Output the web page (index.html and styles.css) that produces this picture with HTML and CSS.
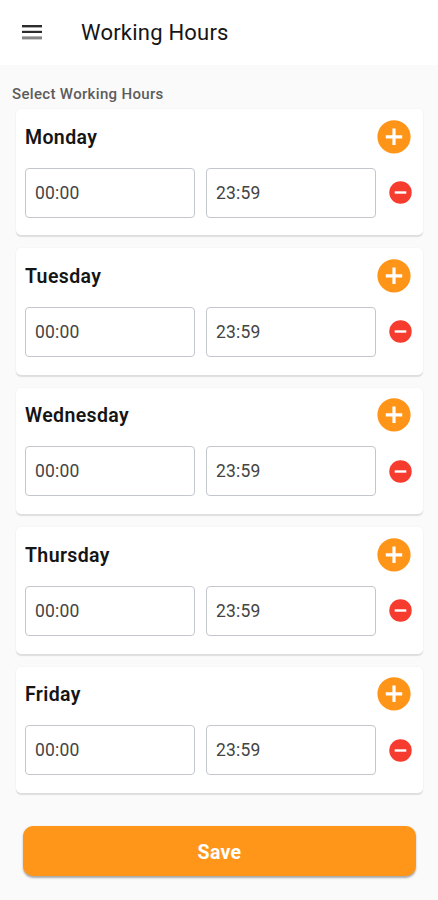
FILE: index.html
```html
<!DOCTYPE html>
<html lang="en">
<head>
    <meta charset="UTF-8">
    <meta name="viewport" content="width=device-width, initial-scale=1.0">
    <title>Working Hours</title>
    <link rel="stylesheet" href="styles.css">
</head>
<body>
    <header class="topbar">
        <svg class="menu" viewBox="0 0 20 15">
            <rect y="0" width="20" height="2.4"/>
            <rect y="5.8" width="20" height="2.2"/>
            <rect class="last" y="11.4" width="20" height="3"/>
        </svg>
        <h1>Working Hours</h1>
    </header>

    <main>
        <p class="label">Select Working Hours</p>
        <div id="days"></div>
        <button class="save">Save</button>
    </main>

    <script>
        const days = ["Monday", "Tuesday", "Wednesday", "Thursday", "Friday"];

        document.getElementById("days").innerHTML = days.map(day => `
            <section class="card">
                <div class="card-head">
                    <h2>${day}</h2>
                    <svg class="add" viewBox="0 0 34 34">
                        <circle cx="17" cy="16.8" r="16.6"/>
                        <path d="M17 8.6v16.4M8.8 16.8h16.4"/>
                    </svg>
                </div>
                <div class="times">
                    <div class="time">00:00</div>
                    <div class="time">23:59</div>
                    <svg class="remove" viewBox="0 0 23 23">
                        <circle cx="11.5" cy="11.5" r="11.2"/>
                        <path d="M5.7 11.5h11.6"/>
                    </svg>
                </div>
            </section>`).join("");
    </script>
</body>
</html>
```

FILE: styles.css
```css
* {
    box-sizing: border-box;
}
body {
    margin: 0;
    min-height: 900px;
    background-color: #fafafa;
    color: #151515;
    font-family: Roboto, "Liberation Sans", sans-serif;
}
h1, h2, p {
    margin: 0;
}
.topbar {
    display: flex;
    align-items: center;
    height: 65px;
    padding-left: 22px;
    background-color: #fff;
}
.menu {
    width: 20px;
    height: 15px;
    margin-right: 39px;
    fill: #2c2c2c;
}
.menu .last {
    fill: #858585;
}
h1 {
    font-size: 22px;
    font-weight: 400;
    letter-spacing: 0.22px;
}
main {
    padding: 20px 15px 0 16px;
}
.label {
    height: 24px;
    margin-left: -4px;
    color: #5c5c5c;
    font-size: 15px;
    font-weight: 500;
    line-height: 19px;
    letter-spacing: 0.33px;
}
.card {
    height: 126.4px;
    margin-bottom: 13px;
    padding: 10.6px 11px 0 9px;
    background-color: #fff;
    border-radius: 5px;
    box-shadow: 0 1.5px 1px #dedede, 0 0 2px #f0f0f0;
}
.card-head {
    display: flex;
    align-items: center;
    justify-content: space-between;
    height: 34px;
    padding-right: 1px;
}
h2 {
    padding-top: 1px;
    font-size: 19.5px;
    font-weight: 600;
    letter-spacing: 0.38px;
}
.add {
    width: 34px;
    height: 34px;
    fill: #ff9518;
    stroke-width: 3.2;
}
.add path, .remove path {
    stroke: #fff;
}
.times {
    display: flex;
    align-items: center;
    margin-top: 14px;
}
.time {
    flex: none;
    width: 170px;
    height: 50px;
    margin-right: 11px;
    padding-left: 9px;
    border: 1px solid #c3c7cd;
    border-radius: 4px;
    color: #444;
    font-size: 17.5px;
    line-height: 49px;
    letter-spacing: 0.2px;
}
.remove {
    flex: none;
    width: 23px;
    height: 23px;
    margin-left: 2px;
    fill: #f63c2f;
    stroke-width: 2.4;
}
.save {
    display: block;
    width: 393px;
    height: 50px;
    margin: 33px 0 0 7px;
    padding: 3px 0 0;
    border: 0;
    border-radius: 10px;
    background-color: #ff9619;
    box-shadow: 0 1.5px 2px #aaa;
    color: #fff;
    font-family: inherit;
    font-size: 19.5px;
    font-weight: 700;
    letter-spacing: 0.3px;
}
```
